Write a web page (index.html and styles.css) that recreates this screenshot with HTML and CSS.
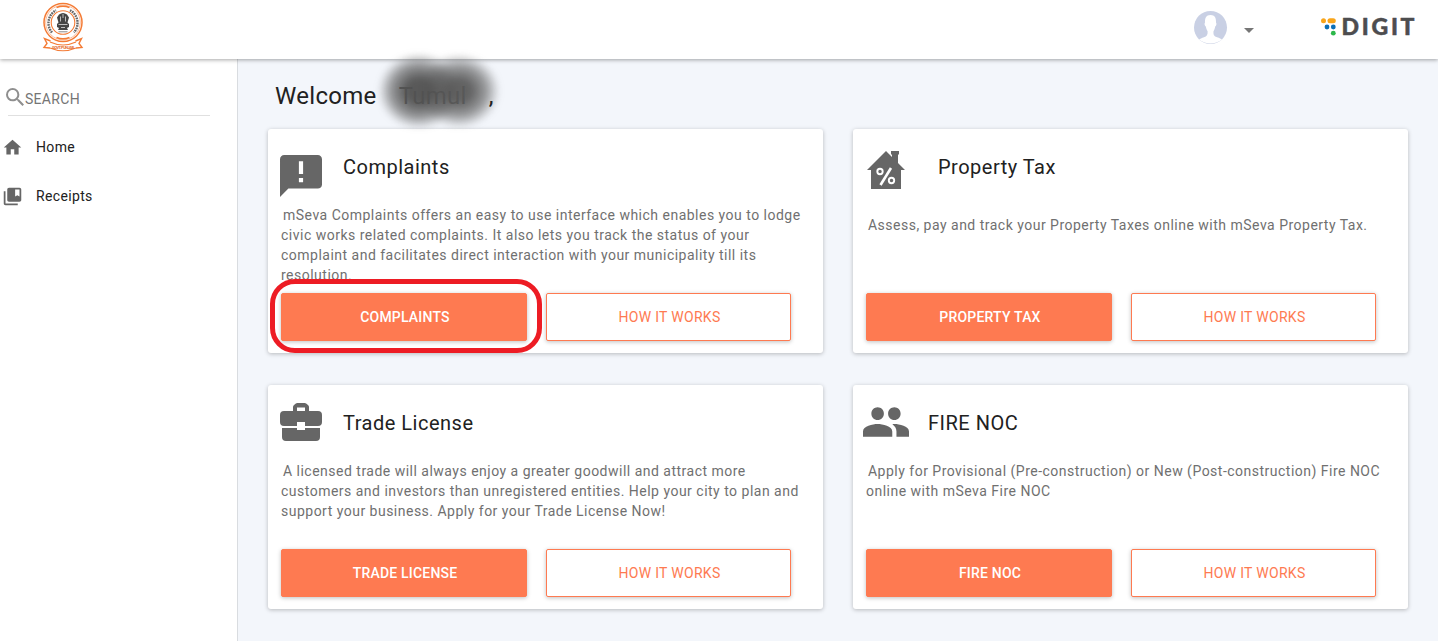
FILE: index.html
```html
<!DOCTYPE html>
<html lang="en">
<head>
<meta charset="utf-8">
<title>mSeva</title>
<link rel="stylesheet" href="styles.css">
</head>
<body>
<header class="topbar">
  <svg class="emblem" viewBox="0 0 42 51" width="42" height="51">
    <g fill="none" stroke="#f47b35">
      <circle cx="21" cy="20.500" r="19" stroke-width="1.500"/>
      <circle cx="21" cy="20.500" r="17.300" stroke-width=".5"/>
      <circle cx="21" cy="20.500" r="11.800" stroke-width="1.100"/>
      <path d="M14.500 5.500q6.500-2.500 13 0M14.500 35.500q6.500 2.500 13 0" stroke-width="1.600"/>
      <path d="M8.500 39l-6-2.500 2.500 5-3 4 6 .5M33.500 39l6-2.500-2.500 5 3 4-6 .5" stroke-width="1.400"/>
      <path d="M8 40q13 6 26 0M8 46q13 5.500 26 0" stroke-width="1.200"/>
    </g>
    <g fill="none" stroke="#666" stroke-width="2.400" stroke-dasharray="1.700 .8">
      <path d="M10 30.500A14.600 14.600 0 0 1 14 8.200"/>
      <path d="M28 8.200A14.600 14.600 0 0 1 32 30.500"/>
    </g>
    <path d="M17 12.500q4-3 8 0l2 3-1.500 5 1.500 1.500v3l-2 1 1 2h-10l1-2-2-1v-3l1.500-1.500-1.500-5z" fill="#444"/>
    <path d="M18.500 14.500v5M23.500 14.500v5M16.500 22.500h9M21 12v4M19 25.500h4" stroke="#ccc" stroke-width=".9"/>
    <path d="M16.500 29.800h9" stroke="#888" stroke-width="1"/>
    <text class="emblem-text" x="21" y="46.500" text-anchor="middle" textLength="22">GOVT. PUNJAB</text>
  </svg>
  <div class="account">
    <svg class="avatar" viewBox="0 0 34 34" width="34" height="34">
      <circle cx="16.500" cy="16.500" r="16.500" fill="#c9d0e4"/>
      <path d="M16.500 4C12 4 10.800 7.500 11 11.500c-.9 1-.3 3.500.8 4 .5 2.500 1.300 3.800 1.800 4.700.3 3.500-.8 5-3.600 6-2.200.8-4 1.400-5 2.600Q10.500 32.500 16.500 32.500T28 28.800c-1-1.200-2.500-1.800-5-2.600-3-1-3.800-2.500-3.500-6 .6-1 1.200-2.200 1.700-4.700 1.100-.5 1.700-3 .8-4C22.200 7 21 4 16.500 4z" fill="#fff"/>
    </svg>
    <svg class="caret" viewBox="0 0 10 5" width="10" height="5"><path d="M0 0h10L5 5z" fill="#767676"/></svg>
    <svg class="digit" viewBox="0 -8 104 42" width="104" height="42">
      <circle cx="3.500" cy="5.800" r="2.500" fill="#f9a51a"/>
      <rect x="7.500" y="3.300" width="8.300" height="5" rx="2.500" fill="#f9a51a"/>
      <circle cx="7" cy="12" r="2.400" fill="#0b6fb8"/>
      <circle cx="13.300" cy="12" r="2.400" fill="#0b6fb8"/>
      <circle cx="13.300" cy="18.200" r="2.400" fill="#2db84b"/>
      <text class="digit-text" x="21.500" y="20" textLength="73">DIGIT</text>
    </svg>
  </div>
</header>
<div class="body">
  <nav class="sidebar">
    <div class="search">
      <svg viewBox="3 3 17.500 17.500" width="18" height="18"><path fill="#8f8f8f" d="M15.500 14h-.79l-.28-.27A6.470 6.470 0 0 0 16 9.500 6.500 6.500 0 1 0 9.500 16c1.610 0 3.090-.59 4.230-1.570l.27.28v.79l5 4.990L20.490 19l-4.990-5zm-6 0C7.010 14 5 11.990 5 9.500S7.010 5 9.500 5 14 7.010 14 9.500 11.990 14 9.500 14z"/></svg>
      <span>SEARCH</span>
    </div>
    <a class="nav-item"><svg viewBox="0 0 24 24" width="21" height="21"><path d="M10 20v-6h4v6h5v-8h3L12 3 2 12h3v8z"/></svg><span>Home</span></a>
    <a class="nav-item"><svg viewBox="0 0 24 24" width="21" height="21"><path d="M4 6H2v14c0 1.100.9 2 2 2h14v-2H4V6zm16-4H8c-1.100 0-2 .9-2 2v12c0 1.100.9 2 2 2h12c1.100 0 2-.9 2-2V4c0-1.100-.9-2-2-2zm0 10l-2.500-1.500L15 12V4h5v8z"/></svg><span>Receipts</span></a>
  </nav>
  <main class="content">
    <h1 class="welcome">Welcome <span class="user">Tumul<i class="smudge"></i></span><span class="comma">,</span></h1>
    <div class="grid">
      <section class="card">
        <div class="head">
          <svg class="icon" viewBox="2 2 20 20" width="42" height="42"><path d="M20 2H4c-1.100 0-1.990.9-1.990 2L2 22l4-4h14c1.100 0 2-.9 2-2V4c0-1.100-.9-2-2-2zm-7 9h-2V5h2v6zm0 4h-2v-2h2v2z"/></svg>
          <h2>Complaints</h2>
        </div>
        <p class="desc">mSeva Complaints offers an easy to use interface which enables you to lodge<br>civic works related complaints. It also lets you track the status of your<br>complaint and facilitates direct interaction with your municipality till its<br>resolution.</p>
        <div class="actions"><button class="btn primary marked">COMPLAINTS</button><button class="btn">HOW IT WORKS</button></div>
      </section>
      <section class="card property">
        <div class="head">
          <svg class="icon" viewBox="0 0 38 38" width="38" height="38"><path d="M19 0l6 6V3.500h-1V0h8v3.500h-1V12l7 7h-4v19H4V19H0z"/><g fill="none" stroke="#fff" stroke-width="1.900"><circle cx="13" cy="20.500" r="2.700"/><circle cx="24.500" cy="29.500" r="2.700"/><path d="M24 17L13.500 34" stroke-width="2.600"/></g></svg>
          <h2>Property Tax</h2>
        </div>
        <p class="desc">Assess, pay and track your Property Taxes online with mSeva Property Tax.</p>
        <div class="actions"><button class="btn primary">PROPERTY TAX</button><button class="btn">HOW IT WORKS</button></div>
      </section>
      <section class="card trade">
        <div class="head">
          <svg class="icon" viewBox="0 0 42 38" width="42" height="38"><path d="M13 8V4q0-1 1-2l1.500-1.300Q16.300 0 17.500 0h7q1.200 0 2 .7L28 2q1 1 1 2v4h9q4 0 4 4v7q0 4-4 4H25v-4h-8v4H4q-4 0-4-4v-7q0-4 4-4zM17 8h8V4.500h-8zM2 25h15v2h8v-2h15v9q0 4-4 4H6q-4 0-4-4z"/></svg>
          <h2>Trade License</h2>
        </div>
        <p class="desc">A licensed trade will always enjoy a greater goodwill and attract more<br>customers and investors than unregistered entities. Help your city to plan and<br>support your business. Apply for your Trade License Now!</p>
        <div class="actions"><button class="btn primary">TRADE LICENSE</button><button class="btn">HOW IT WORKS</button></div>
      </section>
      <section class="card fire">
        <div class="head">
          <svg class="icon" viewBox="1 5 22 14" width="46" height="30"><path d="M16 11c1.660 0 2.990-1.340 2.990-3S17.660 5 16 5s-3 1.340-3 3 1.340 3 3 3zm-8 0c1.660 0 2.990-1.340 2.990-3S9.660 5 8 5 5 6.340 5 8s1.340 3 3 3zm0 2c-2.330 0-7 1.170-7 3.500V19h14v-2.500c0-2.330-4.670-3.500-7-3.500zm8 0c-.29 0-.62.020-.97.050 1.160.84 1.970 1.970 1.970 3.450V19h6v-2.500c0-2.330-4.670-3.500-7-3.500z"/></svg>
          <h2>FIRE NOC</h2>
        </div>
        <p class="desc">Apply for Provisional (Pre-construction) or New (Post-construction) Fire NOC<br>online with mSeva Fire NOC</p>
        <div class="actions"><button class="btn primary">FIRE NOC</button><button class="btn">HOW IT WORKS</button></div>
      </section>
    </div>
  </main>
</div>
</body>
</html>
```
FILE: styles.css
```css
*, *::after { box-sizing: border-box; }
body {
  margin: 0;
  height: 641px;
  display: flex;
  flex-direction: column;
  overflow: hidden;
  font-family: Roboto, sans-serif;
  background: #f3f6fb;
}
.topbar {
  position: relative;
  z-index: 1;
  height: 59px;
  flex: none;
  display: flex;
  align-items: flex-start;
  justify-content: space-between;
  padding: 2px 14px 0 42px;
  background: #fff;
  box-shadow: 0 1px 4px rgba(0, 0, 0, .35);
}
.emblem-text { font: 700 4px Roboto, sans-serif; fill: #e56a2b; }
.account { display: flex; align-items: flex-start; }
.avatar { margin-top: 9px; }
.caret { margin: 26px 0 0 16px; }
.digit { margin: 5px 0 0 66px; }
.digit-text {
  font: 900 23px Lato, sans-serif;
  fill: #4d4d4f;
  stroke: #4d4d4f;
  stroke-width: .5px;
  stroke-linejoin: round;
}
.body { flex: 1; display: flex; }
.sidebar {
  width: 238px;
  flex: none;
  background: #fff;
  border-right: 1px solid #d9dce0;
  padding-top: 28px;
}
.search {
  width: 202px;
  height: 29px;
  margin: 0 0 6px 8px;
  display: flex;
  border-bottom: 1px solid #e0e0e0;
  font-size: 14px;
  line-height: 24px;
  letter-spacing: .3px;
  color: #757575;
}
.search svg { margin: 1px 1px 0 -2px; flex: none; }
.nav-item {
  height: 49px;
  display: flex;
  align-items: center;
  gap: 13px;
  padding-left: 2px;
  font-size: 14px;
  letter-spacing: .35px;
  color: #212121;
}
.nav-item svg { fill: #666; margin-top: 2px; }
.content { flex: 1; padding: 22px 30px 0; }
.welcome {
  height: 30px;
  margin: 0 0 18px 7px;
  display: flex;
  font-size: 24px;
  line-height: 30px;
  font-weight: 400;
  letter-spacing: .3px;
  color: #212121;
}
.user { position: relative; z-index: 2; margin-left: 22px; width: 90px; color: #555; }
.comma { position: relative; z-index: 3; }
.smudge {
  position: absolute;
  left: -24px;
  top: -28px;
  width: 132px;
  height: 78px;
  filter: blur(3px);
  background:
    radial-gradient(ellipse 41px 38px at 44px 38px, rgba(82, 82, 82, .96) 30%, rgba(85, 85, 85, .6) 67%, transparent 100%),
    radial-gradient(ellipse 41px 37px at 84px 38px, rgba(88, 88, 88, .94) 28%, rgba(90, 90, 90, .6) 65%, transparent 100%);
}
.grid {
  display: grid;
  grid-template-columns: 555px 555px;
  grid-auto-rows: 224px;
  gap: 32px 30px;
}
.card {
  display: flex;
  flex-direction: column;
  padding: 13px;
  padding-bottom: 12px;
  background: #fff;
  border-radius: 3px;
  box-shadow: 0 1px 4px rgba(0, 0, 0, .25);
}
.head { display: flex; height: 63px; }
.icon { fill: #666; margin: 13px 0 0 -1px; flex: none; }
h2 {
  margin: 11px 0 0 21px;
  font-size: 20px;
  line-height: 28px;
  font-weight: 400;
  letter-spacing: .5px;
  color: #212121;
}
.desc {
  margin: 0;
  font-size: 14px;
  line-height: 20px;
  letter-spacing: .49px;
  text-indent: 2px;
  white-space: nowrap;
  color: #707070;
}
.actions { display: flex; gap: 19px; margin-top: auto; }
.btn {
  width: 245px;
  height: 48px;
  padding: 0;
  border: 1px solid #fe7a51;
  border-radius: 2px;
  background: #fff;
  box-shadow: 0 1px 4px rgba(0, 0, 0, .25);
  color: #fe7a51;
  font: 400 14px Roboto, sans-serif;
  letter-spacing: .3px;
  padding-left: 2px;
}
.primary { width: 246px; background: #fe7a51; color: #fff; font-weight: 500; letter-spacing: .2px; }
.marked { position: relative; }
.marked::after {
  content: "";
  position: absolute;
  left: -12px;
  top: -15px;
  width: 272px;
  height: 74px;
  border: 5px solid #ed1c24;
  border-radius: 25px;
}
.property .head { height: 73px; }
.property .icon { margin: 9px 0 0 1px; }
.property h2 { margin-left: 33px; }
.trade .icon { margin-top: 5px; }
.fire .icon { margin: 9px 0 0 -3px; }
.fire h2 { margin-left: 19px; }
```
